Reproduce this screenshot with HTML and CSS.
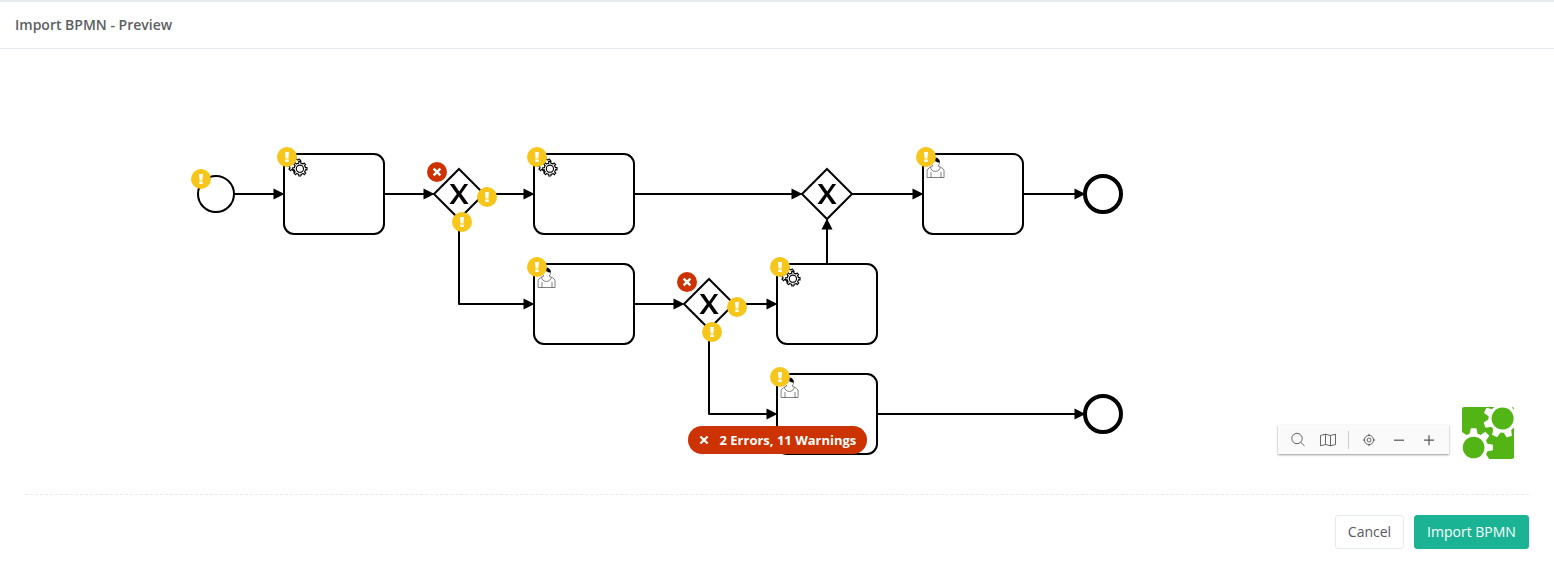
FILE: index.html
```html
<!DOCTYPE html>
<html lang="en">
<head>
<meta charset="utf-8">
<title>Import BPMN - Preview</title>
<link rel="stylesheet" href="styles.css">
</head>
<body>
<div class="modal">
  <header class="modal-header"><h1 class="modal-title">Import BPMN - Preview</h1></header>
  <main class="canvas">
    <svg class="diagram" width="1554" height="445" viewBox="0 49 1554 445">
      <defs>
        <path id="cog" d="m 12,18 v -1.71335 c 0.352326,-0.0705 0.703932,-0.17838 1.047628,-0.32133 0.344416,-0.14465 0.665822,-0.32133 0.966377,-0.52145 l 1.19431,1.18005 1.567487,-1.57688 -1.195028,-1.18014 c 0.403376,-0.61394 0.683079,-1.29908 0.825447,-2.01824 l 1.622133,-0.01 v -2.2196 l -1.636514,0.01 c -0.07333,-0.35153 -0.178319,-0.70024 -0.323564,-1.04372 -0.145244,-0.34406 -0.321407,-0.6644 -0.522735,-0.96217 l 1.131035,-1.13631 -1.583305,-1.56293 -1.129598,1.13589 c -0.614052,-0.40108 -1.302883,-0.68093 -2.022633,-0.82247 l 0.0093,-1.61852 h -2.241173 l 0.0042,1.63124 c -0.353763,0.0736 -0.705369,0.17977 -1.049785,0.32371 -0.344415,0.14437 -0.665102,0.32092 -0.9635006,0.52006 l -1.1698628,-1.15823 -1.5667691,1.5792 1.1684265,1.15669 c -0.4026573,0.61283 -0.68308,1.29797 -0.8247287,2.01713 l -1.6588041,0.003 v 2.22174 l 1.6724648,-0.006 c 0.073327,0.35077 0.1797598,0.70243 0.3242851,1.04472 0.1452428,0.34448 0.3214064,0.6644 0.5227339,0.96066 l -1.1993431,1.19723 1.5840256,1.56011 1.1964668,-1.19348 c 0.6140517,0.40346 1.3028827,0.68232 2.0233517,0.82331 l 7.19e-4,1.69892 h 2.226848 z"/>
        <g id="service" class="thin">
          <use href="#cog"/>
          <use href="#cog" x="5" y="4"/>
          <circle cx="15.9" cy="14.7" r="3.6"/>
        </g>
        <g id="user" class="hairline">
          <path d="m 15,12 c 0.909,-0.845 1.594,-2.049 1.594,-3.385 0,-2.554 -1.805,-4.622 -4.357,-4.622 -2.552,0 -4.288,2.068 -4.288,4.622 0,1.348 0.974,2.562 1.896,3.405 -0.529,0.187 -5.669,2.097 -5.794,4.756 v 6.718 h 17 v -6.718 c 0,-2.298 -5.528,-4.595 -6.051,-4.776z m -7,6 v 5.5 m 10,0 v -5.5"/>
          <path d="m 17.2,13 c 0,2.447 -2.158,4.431 -4.821,4.431 -2.665,0 -4.822,-1.981 -4.822,-4.431"/>
          <path class="solid" d="m 8.1,8.2 c 0,0 2.251,-2.358 4.274,-1.177 2.024,1.181 4.221,1.537 4.124,0.965 -0.098,-0.57 -0.117,-3.791 -4.191,-4.136 -3.572,0.001 -4.243,3.367 -4.207,4.348 z"/>
        </g>
        <rect id="task" class="shape" width="100" height="80" rx="10"/>
        <g id="gateway">
          <path class="shape" d="M0-25 25 0 0 25-25 0z"/>
          <path class="solid" d="M-9.2-10h4.3L0.2-2.6 5.3-10H9.1L2.2-.3 9.6 10H5L-.1 2.5-5.2 10H-9.6L-2.2 0z"/>
        </g>
        <path id="tip" class="solid" d="M.5 0-10.5-5.5V5.5z"/>
        <g id="warn"><circle r="10" fill="#f7c61a"/><path fill="#fff" d="M-2-4.9h4L1.4 1.5h-2.8zM-1.7 2.4h3.4V5.1h-3.4z"/></g>
        <g id="err"><circle r="10" fill="#cc3300"/><path class="cross" d="M-3.4-3.4 3.4 3.4M3.4-3.4-3.4 3.4"/></g>
      </defs>

      <circle class="shape" cx="216" cy="194" r="18"/>
      <circle class="shape end" cx="1103" cy="194" r="18"/>
      <circle class="shape end" cx="1103" cy="414" r="18"/>

      <use href="#task" x="284" y="154"/><use href="#service" x="284" y="154"/>
      <use href="#task" x="534" y="154"/><use href="#service" x="534" y="154"/>
      <use href="#task" x="923" y="154"/><use href="#user" x="923" y="154"/>
      <use href="#task" x="534" y="264"/><use href="#user" x="534" y="264"/>
      <use href="#task" x="777" y="264"/><use href="#service" x="777" y="264"/>
      <use href="#task" x="777" y="374"/><use href="#user" x="777" y="374"/>

      <use href="#gateway" x="459" y="194"/>
      <use href="#gateway" x="827" y="194"/>
      <use href="#gateway" x="709" y="304"/>

      <path class="flow" d="M234 194H280M384 194H430M484 194H530M634 194H798M852 194H919M1023 194H1080M459 219V304H530M634 304H680M734 304H773M827 264V223M709 329V414H773M877 414H1080"/>
      <use href="#tip" x="284" y="194"/><use href="#tip" x="434" y="194"/>
      <use href="#tip" x="534" y="194"/><use href="#tip" x="802" y="194"/>
      <use href="#tip" x="923" y="194"/><use href="#tip" x="1085" y="194"/>
      <use href="#tip" x="534" y="304"/><use href="#tip" x="684" y="304"/>
      <use href="#tip" x="777" y="304"/><use href="#tip" x="777" y="414"/>
      <use href="#tip" x="1085" y="414"/><use href="#tip" transform="translate(827 219) rotate(-90)"/>

      <use href="#warn" x="201" y="179"/><use href="#warn" x="287" y="157"/>
      <use href="#warn" x="537" y="157"/><use href="#warn" x="926" y="157"/>
      <use href="#warn" x="487" y="197"/><use href="#warn" x="462" y="222"/>
      <use href="#warn" x="537" y="267"/><use href="#warn" x="780" y="267"/>
      <use href="#warn" x="737" y="307"/><use href="#warn" x="712" y="332"/>
      <use href="#warn" x="780" y="377"/>
      <use href="#err" x="437" y="172"/><use href="#err" x="687" y="282"/>
    </svg>

    <div class="summary">
      <svg width="10" height="10" viewBox="-5 -5 10 10"><path class="cross" d="M-3.6-3.6 3.6 3.6M3.6-3.6-3.6 3.6"/></svg>
      <span>2 Errors, 11 Warnings</span>
    </div>

    <div class="tools">
      <div class="toolbar">
        <svg class="tool" width="16" height="16" viewBox="0 0 16 16"><circle cx="7" cy="6.5" r="5.2"/><path d="M10.7 10.3 14.5 14"/></svg>
        <svg class="tool map" width="16" height="16" viewBox="0 0 16 16"><path d="M.5 3.5 5.5 2.2 10.5 3.5 15.5 2.2V12.5L10.5 13.8 5.5 12.5.5 13.8zM5.5 2.2V12.5M10.5 3.5V13.8"/></svg>
        <span class="separator"></span>
        <svg class="tool" width="16" height="16" viewBox="0 0 16 16"><circle cx="8" cy="8" r="4.6"/><circle cx="8" cy="8" r="2"/><path d="M8 1.8V4M8 12v2.2M1.8 8H4M12 8h2.2"/></svg>
        <svg class="tool bold" width="16" height="16" viewBox="0 0 16 16"><path d="M3 8.2H13"/></svg>
        <svg class="tool bold" width="16" height="16" viewBox="0 0 16 16"><path d="M3 8.2H13M8 3.2V13.2"/></svg>
      </div>
      <svg class="logo" width="52" height="52" viewBox="0 0 52 52">
        <defs>
          <path id="tooth" fill="#fff" d="M13-4.1 19.3-2.8V2.8L13 4.1z"/>
          <g id="gear">
            <circle r="14.2" fill="#fff"/>
            <use href="#tooth"/><use href="#tooth" transform="rotate(45)"/>
            <use href="#tooth" transform="rotate(90)"/><use href="#tooth" transform="rotate(135)"/>
            <use href="#tooth" transform="rotate(180)"/><use href="#tooth" transform="rotate(225)"/>
            <use href="#tooth" transform="rotate(270)"/><use href="#tooth" transform="rotate(315)"/>
          </g>
        </defs>
        <rect width="52" height="52" rx="2" fill="#52b415"/>
        <use href="#gear" transform="translate(40.7 11.5) rotate(25)"/>
        <use href="#gear" transform="translate(11.6 40.5)"/>
        <circle cx="40.6" cy="11.5" r="11" fill="#52b415"/>
        <circle cx="11.6" cy="40.5" r="10.8" fill="#52b415"/>
      </svg>
    </div>
  </main>
  <footer class="modal-footer">
    <button class="btn btn-default">Cancel</button>
    <button class="btn btn-primary">Import BPMN</button>
  </footer>
</div>
</body>
</html>
```
FILE: styles.css
```css
* { box-sizing: border-box; }
body { margin: 0; background: #fff; font-family: "Open Sans", sans-serif; color: #5c6063; }
.modal { height: 579px; display: flex; flex-direction: column; overflow: hidden; }
.modal-header { height: 49px; flex: none; display: flex; align-items: center; padding-left: 15px; border-top: 2px solid #e7eaec; border-bottom: 1px solid #e7eaec; }
.modal-title { margin: 0; font-size: 14px; font-weight: 600; line-height: 20px; }
.canvas { position: relative; height: 445px; flex: none; }
.diagram { display: block; }
.shape { fill: #fff; stroke: #000; stroke-width: 2; }
.end { stroke-width: 4; }
.flow { fill: none; stroke: #000; stroke-width: 2; stroke-linejoin: round; }
.solid { fill: #000; }
.thin { fill: #fff; stroke: #000; stroke-width: 1.1; }
.hairline { fill: #fff; stroke: #000; stroke-width: .5; }
.cross { fill: none; stroke: #fff; stroke-width: 2.4; }
.summary { position: absolute; left: 687.5px; top: 377px; width: 179px; height: 28px; border-radius: 14px; background: #c30; color: #fff; display: flex; align-items: center; padding-left: 11px; gap: 11px; font-size: 13px; font-weight: 700; white-space: nowrap; }
.summary .cross { stroke-width: 2.1; }
.tools { position: absolute; right: 40px; bottom: 35px; display: flex; align-items: flex-end; gap: 13px; }
.toolbar { height: 29px; width: 171px; margin-bottom: 5px; background: #fafafa; box-shadow: 0 1px 2px rgba(0,0,0,.4); display: flex; align-items: center; padding-left: 12px; gap: 14px; }
.tool { fill: none; stroke: #555; stroke-width: .9; flex: none; }
.tool.bold { stroke-width: 1.2; }
.separator { width: 1px; height: 18px; background: #ccc; margin: 0 -2px; }
.logo { display: block; }
.modal-footer { margin: 0 25px; flex: 1; display: flex; justify-content: flex-end; align-items: flex-start; gap: 10px; padding-top: 20px; border-top: 1px dashed #e7eaec; }
.btn { height: 34px; padding: 0; border-radius: 3px; font: 14px/20px "Open Sans", sans-serif; }
.btn-default { width: 69px; border: 1px solid #e7eaec; background: #fff; color: #55595d; }
.btn-primary { width: 115px; border: 1px solid #1ab394; background: #1ab394; color: #fff; }
```
